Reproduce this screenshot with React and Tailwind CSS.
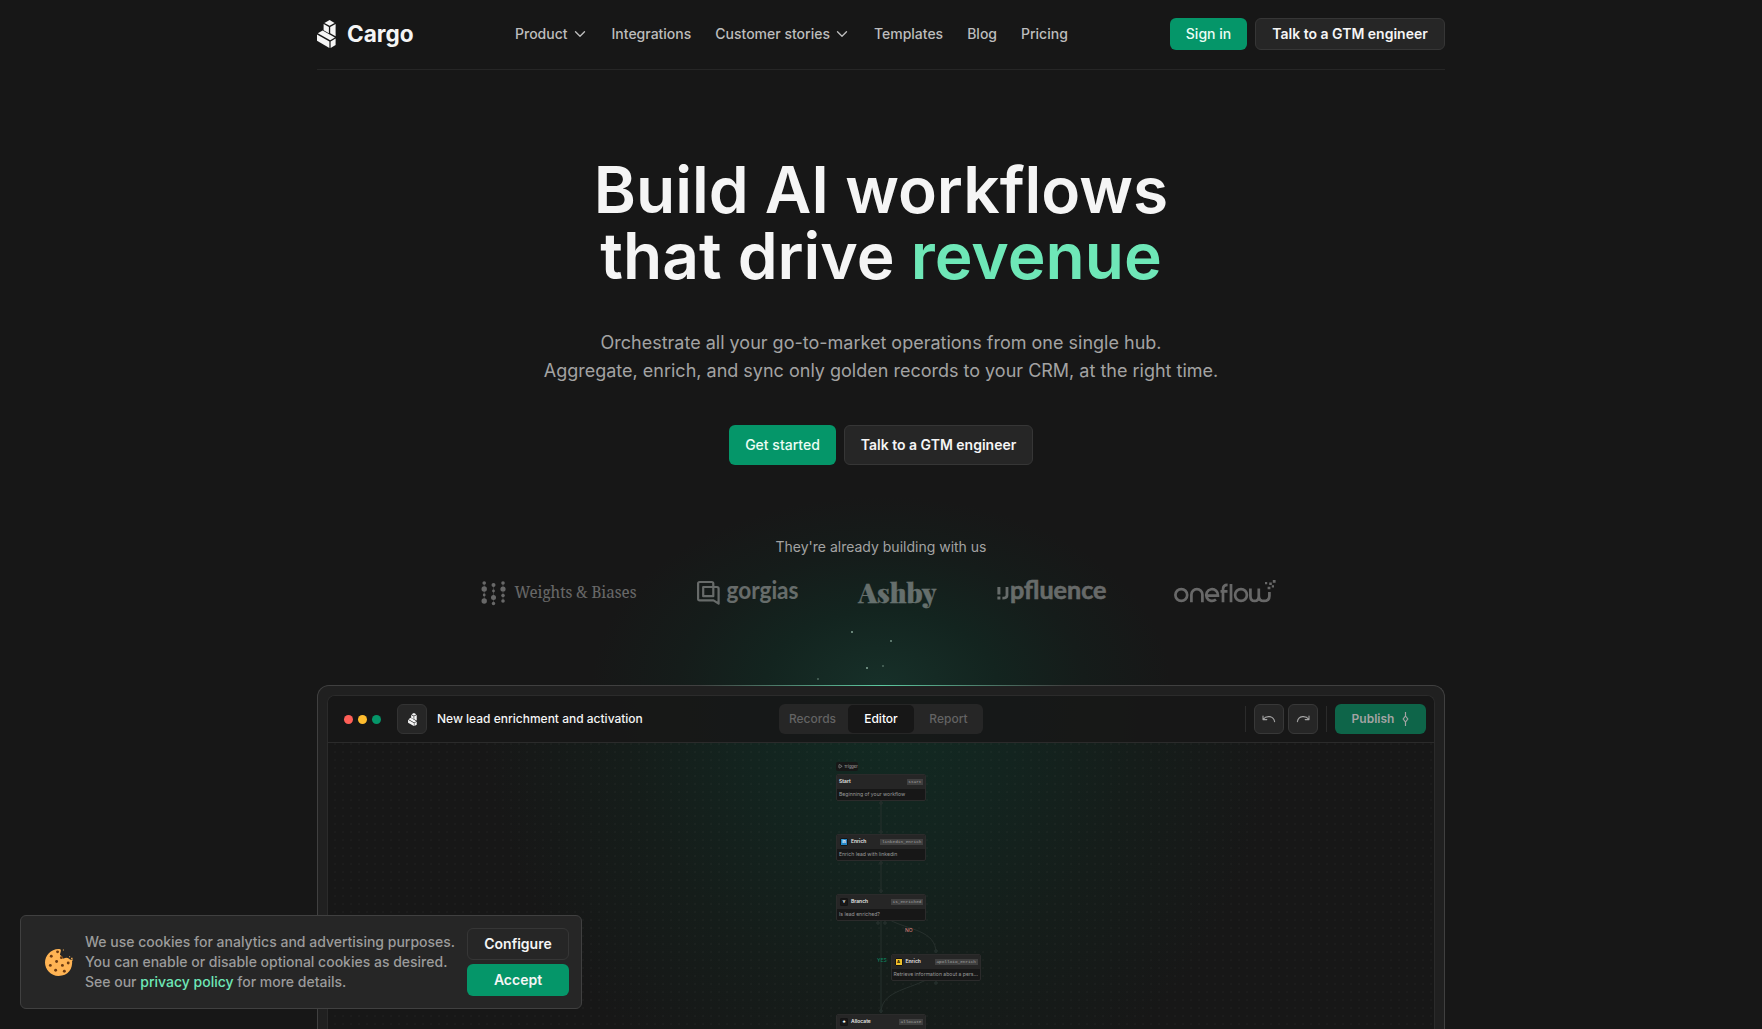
import { ChevronDown, Play } from 'lucide-react';

function CargoMark({ className }) {
  return (
    <svg className={className} viewBox="0 0 19 28" fill="currentColor">
      <path d="M12.6 0 17.6 2.9 12.6 5.8 7.4 2.9Z" />
      <path d="M6.6 4.1 11.9 7.1V13.2L6.6 10.2Z" />
      <path d="M13.2 7.1 18.6 4.1V16.2L13.2 13.2Z" />
      <path d="M5.6 10.4 17.9 17.6 13.2 20.3 .8 13.2Z" />
      <path d="M0 14.4 12.4 21.5V28L0 20.8Z" />
      <path d="M13.6 21.5 18.6 18.6V25.1L13.6 28Z" />
    </svg>
  );
}

const NAV = [['Product', true], ['Integrations'], ['Customer stories', true], ['Templates'], ['Blog'], ['Pricing']];

function Header() {
  return (
    <header className="flex h-[70px] items-start justify-between border-b border-[#262626]">
      <div className="mt-5 flex w-[198px] items-center gap-[11px] text-[#f5f5f5]">
        <CargoMark className="h-7 w-[19px]" />
        <span className="text-[22.6px] font-bold leading-7">Cargo</span>
      </div>
      <nav className="mt-6 flex flex-1 gap-6 text-sm font-medium leading-5 text-[#bdbdbd]">
        {NAV.map(([label, menu]) => (
          <span key={label} className="flex items-center gap-[3px] whitespace-nowrap">
            {label}
            {menu && <ChevronDown className="-mr-px h-[18px] w-[18px]" strokeWidth={1.8} />}
          </span>
        ))}
      </nav>
      <div className="mt-[18px] flex gap-2 text-sm">
        <button className="h-8 w-[77px] rounded-md bg-[#059669] font-medium text-[#ecfdf5]">Sign in</button>
        <button className="h-8 w-[190px] whitespace-nowrap rounded-md border border-[#363636] bg-[#262626] font-semibold text-[#f5f5f5]">Talk to a GTM engineer</button>
      </div>
    </header>
  );
}

const WB_DOTS = [
  [2.7, 2, 1.8], [2.7, 8, 2.7], [2.7, 14, 1.4], [2.7, 20, 2.7],
  [12, 4, 2], [12, 10, 1.4], [12, 16.5, 2.5], [12, 22.5, 1.7],
  [21.5, 2, 1.8], [21.5, 8, 2.6], [21.5, 14.5, 1.8], [21.5, 20, 1.8],
];

function Logos() {
  return (
    <div className="mt-5 flex h-8 w-full text-white opacity-35">
      <svg width="160" height="32" className="ml-[163px] overflow-visible" fill="currentColor">
        <g transform="translate(1.5 4)">
          {WB_DOTS.map(([x, y, r]) => <circle key={`${x}-${y}`} cx={x} cy={y} r={r} />)}
          <path d="M2.3 2h.8v18h-.8zM11.6 4h.8v18h-.8zM21.1 2h.8v18h-.8z" opacity=".5" />
        </g>
        <text x="34.5" y="21" fontFamily="Noto Serif, Liberation Serif, serif" fontSize="16.5" textLength="122" lengthAdjust="spacingAndGlyphs">Weights &amp; Biases</text>
      </svg>
      <svg width="104" height="32" className="ml-[56px] overflow-visible" fill="currentColor">
        <g fill="none" stroke="currentColor" strokeWidth="2.2" strokeLinejoin="round">
          <path d="M17.3 9V6.6Q17.3 5 15.7 5H3.7Q2.1 5 2.1 6.6V21.8Q2.1 23.4 3.7 23.4H17.5L22.6 26.7V11.7Q22.6 10 20.9 10H7.2V19.2H17.3V9" />
        </g>
        <text x="30.5" y="21.5" fontFamily="Lato, sans-serif" fontWeight="700" fontSize="24" textLength="72" lengthAdjust="spacingAndGlyphs">gorgias</text>
      </svg>
      <svg width="82" height="34" className="ml-[58px] overflow-visible" fill="currentColor">
        <text x=".5" y="25.500" fontFamily="Playfair Display, DejaVu Serif, serif" fontWeight="900" fontSize="26" stroke="currentColor" strokeWidth=".3" textLength="78" lengthAdjust="spacingAndGlyphs">Ashby</text>
      </svg>
      <svg width="114" height="32" className="ml-[57px] overflow-visible" fill="currentColor">
        <path d="M.4 10h3v7.6h-3zM.4 19.4h3v3h-3z" />
        <path d="M10 10v8.2q0 3-4.6 3" fill="none" stroke="currentColor" strokeWidth="2.8" />
        <text x="13" y="22.3" fontFamily="Lato, sans-serif" fontWeight="700" fontSize="24" stroke="currentColor" strokeWidth=".5" textLength="96.5" lengthAdjust="spacingAndGlyphs">pfluence</text>
      </svg>
      <svg width="106" height="32" className="ml-[63px] overflow-visible" fill="none" stroke="currentColor" strokeWidth="2.7">
        <circle cx="7.3" cy="18" r="5.9" />
        <path d="M17.4 25.2V17.7a5.5 5.5 0 0 1 11 0v7.5M32.5 18.6H44a5.9 5.9 0 1 0-2 3.9M49 25.2V12.5q0-4.6 4.6-4.6M46.5 14.3h7M57 7v18.2" />
        <circle cx="67" cy="18" r="5.9" />
        <path d="M76.4 11.5v7.4q0 5 4.2 5t4.2-5v-7.4M84.8 18.9q0 5 5 5 5.6-.1 5.6-5v-4" />
        <g fill="currentColor" stroke="none"><path d="M98.8 3h2.8v2.800h-2.800zM95.200 5.500h2.600v2.600h-2.600zM91 5h2.200v2.200H91zM93.600 9.700h2.800v2.600h-2.800zM97.800 8.300h2.200v2.200h-2.200z" /></g>
      </svg>
    </div>
  );
}

function Hero() {
  return (
    <section className="relative flex flex-col items-center">
      <h1 className="mt-[87px] text-center text-[64px] font-semibold leading-[66px] text-[#f5f5f5]">
        Build AI workflows<br />that drive <span className="text-[#6ee7b7]">revenue</span>
      </h1>
      <p className="mt-10 text-center text-lg leading-7 text-[#a3a3a3]">
        Orchestrate all your go-to-market operations from one single hub.<br />
        Aggregate, enrich, and sync only golden records to your CRM, at the right time.
      </p>
      <div className="mt-10 flex gap-2 text-sm">
        <button className="h-10 w-[107px] rounded-md bg-[#059669] font-medium text-[#ecfdf5]">Get started</button>
        <button className="h-10 w-[189px] whitespace-nowrap rounded-md border border-[#363636] bg-[#262626] font-semibold text-[#f5f5f5]">Talk to a GTM engineer</button>
      </div>
      <p className="mt-[72px] text-sm leading-5 text-[#a3a3a3]">They're already building with us</p>
      <Logos />
    </section>
  );
}

function WorkflowNode({ place, icon, iconClass, title, tag, text }) {
  return (
    <div className={`absolute h-[27px] w-[90px] overflow-hidden rounded-[2px] border-[0.5px] border-[#2b2b2b] bg-[#171717] leading-none ${place}`}>
      <div className="flex h-[14.5px] items-center bg-[#262626] px-[2px]">
        {icon && <span className={`ml-px mr-[3px] flex h-2 w-2 items-center justify-center rounded-[1px] border border-[#141414] text-[4px] font-bold ${iconClass}`}>{icon}</span>}
        <span className="text-[5px] font-semibold text-[#e5e5e5]">{title}</span>
        <span className="ml-auto bg-[#404040] px-[1.5px] py-[1px] font-['Liberation_Mono'] text-[4.4px] text-[#a3a3a3]">{tag}</span>
      </div>
      <p className="flex h-[12px] items-center whitespace-nowrap px-[2px] text-[5.1px] text-[#9a9a9a]">{text}</p>
    </div>
  );
}

function Canvas() {
  return (
    <div className="relative flex-1 overflow-hidden bg-[radial-gradient(circle_at_1px_1px,#ffffff06_0.7px,transparent_1px)] bg-[size:8px_8px] bg-[position:6px_8px]">
      <svg className="absolute left-[508px] top-0" width="160" height="300" fill="none" stroke="#27302d" strokeWidth="1">
        <path d="M45 57V90M45 118V150M45 177V270M54 177C72 187 100 187 100 210M90 237C70 247 45 249 45 270" />
        <g fill="#1d2b27"><circle cx="45" cy="60" r="1.3" /><circle cx="45" cy="89" r="1.3" /><circle cx="45" cy="120" r="1.3" /><circle cx="45" cy="148" r="1.3" /><circle cx="42" cy="180" r="1.3" /><circle cx="49" cy="180" r="1.3" /><circle cx="100" cy="208" r="1.3" /><circle cx="100" cy="240" r="1.3" /><circle cx="45" cy="268" r="1.3" /></g>
      </svg>
      <span className="absolute left-[508px] top-[19px] flex h-[9px] w-[22px] items-center gap-[1.5px] rounded-[2px] bg-[#171717] px-[2px] text-[4px] leading-none text-[#b5b5b5]"><Play className="h-[4.5px] w-[4.5px] shrink-0" strokeWidth={3} />Trigger</span>
      <WorkflowNode place="left-[508px] top-[30.5px]" title="Start" tag="start" text="Beginning of your workflow" />
      <WorkflowNode place="left-[508px] top-[90.5px]" icon="in" iconClass="bg-[#2586c4] text-white" title="Enrich" tag="linkedin_enrich" text="Enrich lead with linkedin" />
      <WorkflowNode place="left-[508px] top-[150.5px]" icon="Y" iconClass="bg-[#171717] text-white" title="Branch" tag="is_enriched" text="Is lead enriched?" />
      <span className="absolute left-[577px] top-[184.5px] text-[5px] leading-none text-[#e08b86]">NO</span>
      <span className="absolute left-[549px] top-[214.5px] text-[5px] leading-none text-[#0c8a63]">YES</span>
      <WorkflowNode place="left-[562.5px] top-[210.5px]" icon="A" iconClass="bg-[#f0c12c] text-black" title="Enrich" tag="apolloio_enrich" text="Retrieve information about a pers..." />
      <WorkflowNode place="left-[508px] top-[270.5px]" icon="★" iconClass="bg-[#171717] text-white" title="Allocate" tag="allocate" text="" />
    </div>
  );
}

function HistoryArrow({ className = '' }) {
  return (
    <svg width="14" height="10" viewBox="0 0 14 10" className={className} fill="none" stroke="currentColor" strokeWidth="1.1" strokeLinecap="round" strokeLinejoin="round">
      <path d="M1 2V5.6H4.8M1.3 5.3C4 1.4 11.6 1.4 12.6 7.6" />
    </svg>
  );
}

function EditorWindow() {
  return (
    <div className="relative mt-[76px] flex h-[420px] flex-col rounded-t-xl border border-b-0 border-[#404040] bg-[#202020] px-[9px] pt-[9px]">
      <div className="absolute -top-px left-[380px] h-px w-[366px] bg-[linear-gradient(90deg,transparent,#5cc9a0_50%,transparent)]" />
      <div className="flex flex-1 flex-col overflow-hidden rounded-t-lg border border-b-0 border-[#2b2b2b] bg-[#171717] bg-[radial-gradient(400px_440px_at_50%_0px,#122b23_0%,#13241f_35%,#151d1a_65%,#17171700_100%)]">
        <div className="flex h-[47px] shrink-0 items-center border-b border-[#2b2b2b] bg-[#171717e6] pl-4 pr-[8px]">
          <div className="flex w-[435px] items-center">
            <span className="h-[9px] w-[9px] rounded-full bg-[#ff5f57]" />
            <span className="ml-[5px] h-[9px] w-[9px] rounded-full bg-[#febc2e]" />
            <span className="ml-[5px] h-[9px] w-[9px] rounded-full bg-[#059669]" />
            <span className="ml-4 flex h-[30px] w-[30px] items-center justify-center rounded-md border border-[#333] bg-[#262626] text-[#f5f5f5]"><CargoMark className="h-[13px] w-[9px]" /></span>
            <span className="ml-2.5 text-[12px] font-medium text-[#f5f5f5]">New lead enrichment and activation</span>
          </div>
          <div className="flex h-[30px] w-[204px] items-center rounded-md bg-[#262626] text-[12px] font-medium text-[#636363]">
            <span className="w-[69px] pr-0.5 text-center">Records</span>
            <span className="flex h-7 w-[66px] items-center justify-center rounded-[5px] bg-[#171717] text-white">Editor</span>
            <span className="w-[69px] text-center">Report</span>
          </div>
          <div className="ml-auto flex items-center text-[#a3a3a3]">
            <span className="mr-2 h-[26px] w-px bg-[#2b2b2b]" />
            <span className="flex h-[30px] w-[30px] items-center justify-center rounded-md border border-[#383838] bg-[#262626]"><HistoryArrow /></span>
            <span className="ml-1 flex h-[30px] w-[30px] items-center justify-center rounded-md border border-[#383838] bg-[#262626]"><HistoryArrow className="-scale-x-100" /></span>
            <span className="mx-2 h-[26px] w-px bg-[#2b2b2b]" />
            <span className="flex h-[30px] w-[91px] items-center justify-center gap-2 rounded-md bg-[#0e6549] text-[12px] font-semibold">
              Publish
              <svg width="7" height="14" fill="none" stroke="currentColor" strokeWidth="1.2"><path d="M3.5 0v4M3.5 10v4M3.5 4 5.8 7 3.5 10 1.2 7Z" /></svg>
            </span>
          </div>
        </div>
        <Canvas />
      </div>
    </div>
  );
}

const CHIPS = [[13, 4], [6.5, 8.5], [17, 10], [12, 14], [24, 15.5], [18, 18], [5.5, 18], [11, 23], [20, 24]];

function CookieBanner() {
  return (
    <aside className="fixed bottom-5 left-5 flex h-[94px] w-[562px] items-center rounded-md border border-[#404040] bg-[#262626] pl-6 pr-3">
      <svg width="29" height="29" viewBox="0 0 30 30">
        <path d="M14 1C18 .5 16 4 15.5 7c1 1 3 1.5 3.5 4 2-1 4-1.5 6 0 1 1.5 2.5 1 3 1 1 10-4 17-14 17C6 29 0 22 0 15 0 8 6 1 14 1Z" fill="#ffb454" />
        {CHIPS.map(([x, y]) => <circle key={`${x}-${y}`} cx={x} cy={y} r="1.5" fill="#6b3a12" />)}
        <path d="M18.5 1.5h1v1h-1zM25 8.5h1v1h-1zM27 10h1.5v1.5H27zM28 12h1v1h-1z" fill="#ffb454" />
      </svg>
      <p className="ml-[11px] w-[382px] whitespace-nowrap text-sm font-medium leading-5 text-[#9b9b9b]">
        We use cookies for analytics and advertising purposes.<br />
        You can enable or disable optional cookies as desired.<br />
        See our <span className="text-[#6ee7b7]">privacy policy</span> for more details.
      </p>
      <div className="ml-auto flex flex-col gap-1 text-sm font-semibold text-[#f5f5f5]">
        <button className="h-8 w-[102px] rounded-md border border-[#363636]">Configure</button>
        <button className="h-8 w-[102px] rounded-md bg-[#059669]">Accept</button>
      </div>
    </aside>
  );
}

const SPARKS = [
  'left-[851px] top-[631px] opacity-60', 'left-[890px] top-[640px] opacity-50', 'left-[866px] top-[667px] opacity-60',
  'left-[882px] top-[665px] opacity-30', 'left-[817px] top-[678px] opacity-30',
];

export default function App() {
  return (
    <div className="relative h-[1029px] w-full overflow-hidden bg-[#171717] font-['Inter',sans-serif] antialiased">
      <div className="absolute left-0 top-0 h-[686px] w-full bg-[radial-gradient(290px_190px_at_50%_100%,#173029_0%,#13241f_40%,#151c1a_70%,#17171700_100%)]" />
      {SPARKS.map((s) => <span key={s} className={`absolute h-0.5 w-0.5 rounded-full bg-[#d1fae5] ${s}`} />)}
      <div className="relative mx-auto w-[1128px]">
        <Header />
        <Hero />
        <EditorWindow />
      </div>
      <CookieBanner />
    </div>
  );
}
